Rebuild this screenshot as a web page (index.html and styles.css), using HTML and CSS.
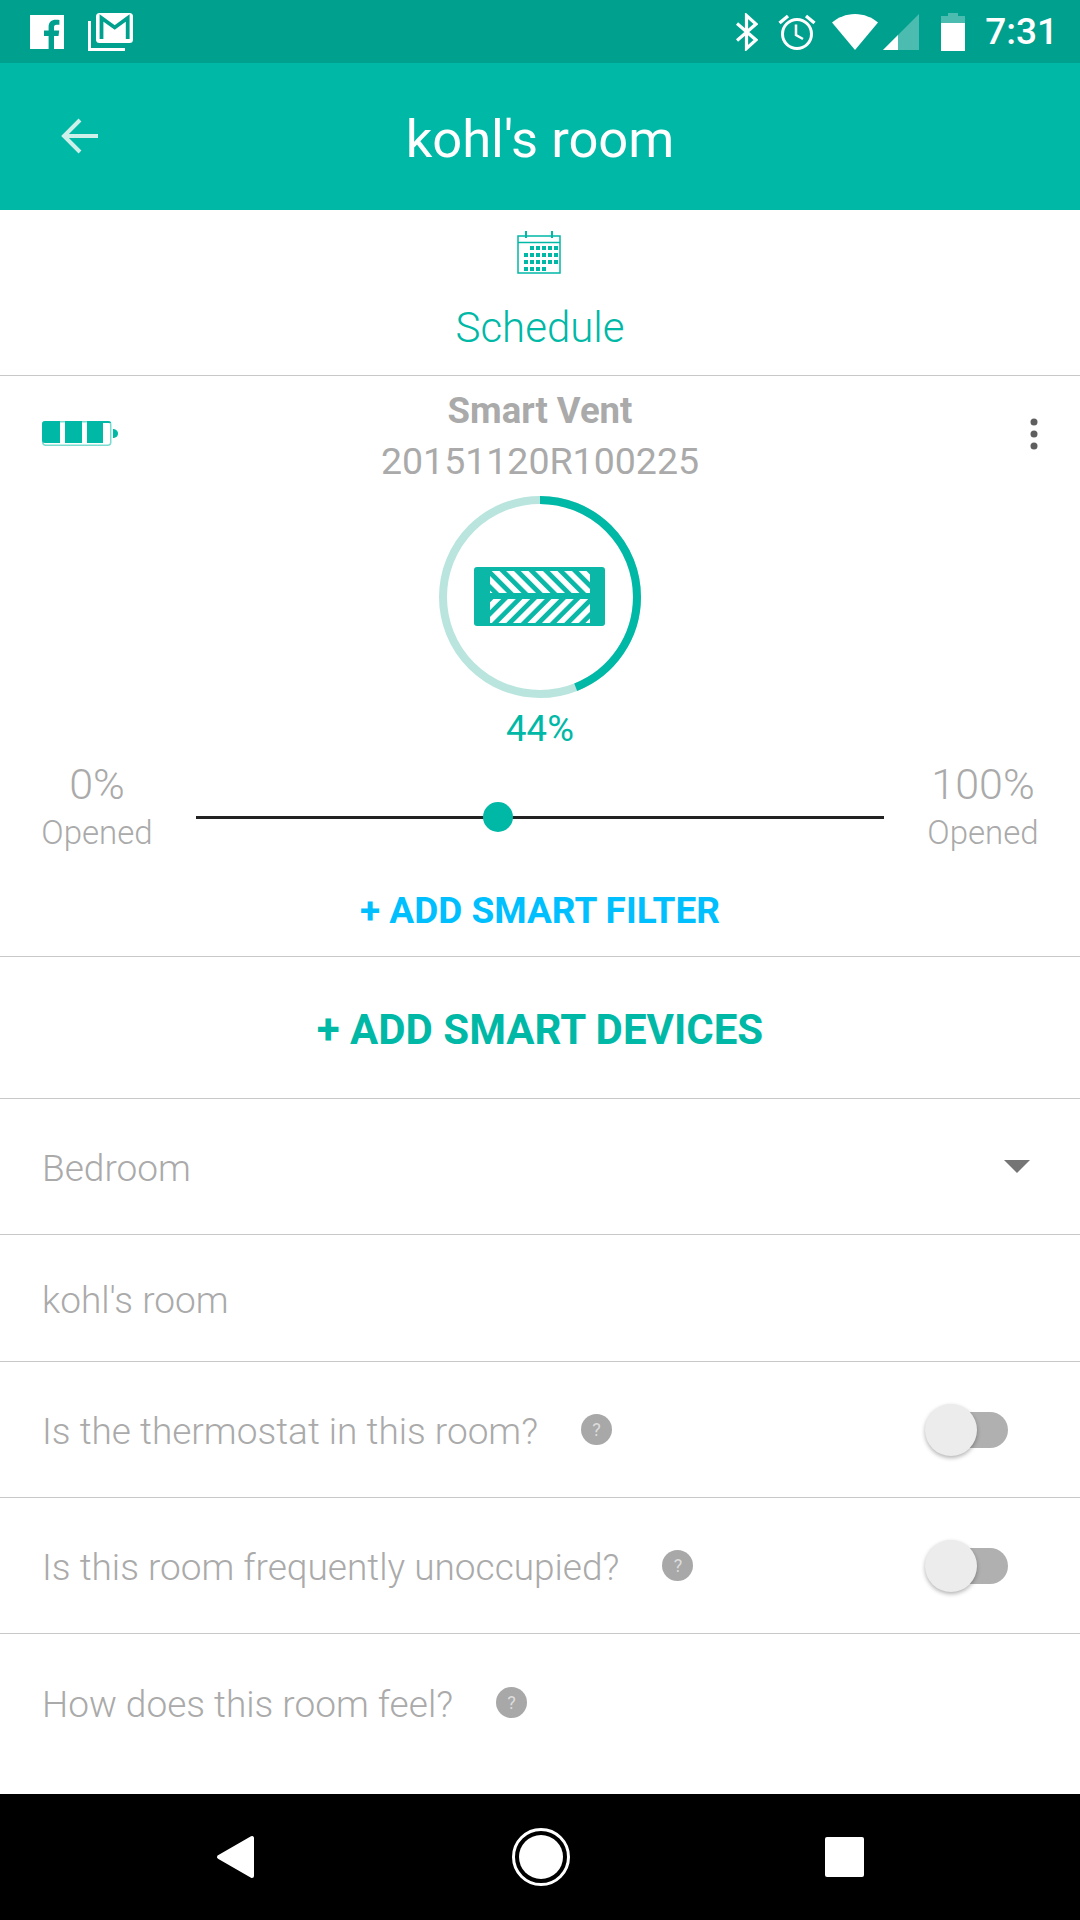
FILE: index.html
```html
<!DOCTYPE html>
<html lang="en">
<head>
    <meta charset="UTF-8">
    <meta name="viewport" content="width=device-width, initial-scale=1.0">
    <title>kohl's room</title>
    <link rel="stylesheet" href="styles.css">
</head>
<body>
    <div class="phone">
        <!-- Status bar -->
        <div class="status-bar">
            <div class="status-left">
                <svg class="icon-fb" width="34" height="34" viewBox="0 0 34 34">
                    <path fill="#fff" d="M0 0H34V34H24V21H28.500L29.200 15.500H24V12.500C24 10.800 24.600 9.800 26.700 9.800H29.400V5C28.600 4.900 27.300 4.800 25.600 4.800C21.600 4.800 18.600 7.200 18.600 11.800V15.500H14V21H18.600V34H0Z"/>
                </svg>
                <svg class="icon-gmail" width="46" height="38" viewBox="0 0 46 38">
                    <path fill="none" stroke="#fff" stroke-width="3" d="M1.500 8V36.500H37"/>
                    <rect x="8" y="0" width="37" height="30" rx="3.500" fill="#fff"/>
                    <path fill="none" stroke="#00a08f" stroke-width="3.800" d="M13.500 26V5L26.700 14.500L39.700 5V26"/>
                </svg>
            </div>
            <div class="status-right">
                <svg width="22" height="38" viewBox="0 0 22 38">
                    <path fill="none" stroke="#fff" stroke-width="3.200" d="M1 10.500L20 27L10.500 35.500V2.500L20 11L1 27.500"/>
                </svg>
                <svg class="icon-alarm" width="38" height="38" viewBox="0 0 38 38">
                    <circle cx="19" cy="21" r="14.500" fill="none" stroke="#fff" stroke-width="3"/>
                    <path fill="none" stroke="#fff" stroke-width="2.500" d="M18 11.500V22L25 26"/>
                    <path fill="none" stroke="#fff" stroke-width="3.400" d="M1.500 10L10 3M36.500 10L28 3"/>
                </svg>
                <svg class="icon-wifi" width="46" height="36" viewBox="0 0 46 36">
                    <path fill="#fff" d="M0 8.500C6 3.500 14 0 23 0C32 0 40 3.500 46 8.500L23 36Z"/>
                </svg>
                <svg class="icon-signal" width="36" height="36" viewBox="0 0 36 36">
                    <path fill="#fff" fill-opacity="0.3" d="M36 0V36H0Z"/>
                    <path fill="#fff" d="M15 21V36H0Z"/>
                </svg>
                <svg class="icon-battery" width="24" height="38" viewBox="0 0 24 38">
                    <path fill="#fff" fill-opacity="0.3" d="M7 0H17V3H24V10H0V3H7Z"/>
                    <rect y="10" width="24" height="28" fill="#fff"/>
                </svg>
                <span class="clock">7:31</span>
            </div>
        </div>

        <!-- Header -->
        <div class="app-bar">
            <svg class="back-arrow" width="38" height="36" viewBox="0 0 38 36">
                <path fill="none" stroke="#cdf0ea" stroke-width="4" d="M37 18H3M19 2L3 18L19 34"/>
            </svg>
            <h1>kohl's room</h1>
        </div>

        <div class="schedule">
            <svg class="schedule-icon" width="44" height="43" viewBox="0 0 44 43">
                <path fill="none" stroke="#00b8a6" stroke-width="1.500" d="M1 5H43V42H1ZM1 11.500H43"/>
                <path fill="none" stroke="#00b8a6" stroke-width="2" d="M9 0V7M35 0V7"/>
                <g fill="#00b8a6">
                    <rect x="13" y="15" width="4" height="4"/><rect x="19" y="15" width="4" height="4"/><rect x="25" y="15" width="4" height="4"/><rect x="31" y="15" width="4" height="4"/><rect x="37" y="15" width="4" height="4"/>
                    <rect x="7" y="22" width="4" height="4"/><rect x="13" y="22" width="4" height="4"/><rect x="19" y="22" width="4" height="4"/><rect x="25" y="22" width="4" height="4"/><rect x="31" y="22" width="4" height="4"/><rect x="37" y="22" width="4" height="4"/>
                    <rect x="7" y="29" width="4" height="4"/><rect x="13" y="29" width="4" height="4"/><rect x="19" y="29" width="4" height="4"/><rect x="25" y="29" width="4" height="4"/><rect x="31" y="29" width="4" height="4"/><rect x="37" y="29" width="4" height="4"/>
                    <rect x="7" y="36" width="4" height="4"/><rect x="13" y="36" width="4" height="4"/><rect x="19" y="36" width="4" height="4"/><rect x="25" y="36" width="4" height="4"/>
                </g>
            </svg>
            <div class="schedule-label">Schedule</div>
        </div>

        <!-- Vent -->
        <div class="vent">
            <svg class="vent-battery" width="76" height="25" viewBox="0 0 76 25">
                <rect x="0.750" y="0.750" width="68" height="23.500" rx="3" fill="#fff" stroke="#7adccf" stroke-width="1.500"/>
                <path fill="#00b8a6" d="M3 0H18V22H3Q0 22 0 19V3Q0 0 3 0ZM23 0H40V22H23ZM45 0H61V22H45ZM61 0H66Q69 0 69 2H61Z"/>
                <path fill="#00b8a6" d="M71 8H72Q76 9 76 12.500Q76 16 72 17H71Z"/>
            </svg>
            <svg class="vent-menu" width="8" height="32" viewBox="0 0 8 32">
                <circle cx="4" cy="4" r="3.500" fill="#5f5f5f"/>
                <circle cx="4" cy="16" r="3.500" fill="#5f5f5f"/>
                <circle cx="4" cy="28" r="3.500" fill="#5f5f5f"/>
            </svg>
            <div class="vent-name">Smart Vent</div>
            <div class="vent-serial">20151120R100225</div>
            <svg class="vent-dial" width="204" height="204" viewBox="0 0 204 204">
                <defs>
                    <pattern id="stripes-down" width="10.250" height="10.250" patternUnits="userSpaceOnUse" patternTransform="rotate(45)">
                        <rect width="10.250" height="5.500" fill="#fff"/>
                    </pattern>
                    <pattern id="stripes-up" width="10.250" height="10.250" patternUnits="userSpaceOnUse" patternTransform="rotate(-45)">
                        <rect width="10.250" height="5.500" fill="#fff"/>
                    </pattern>
                </defs>
                <circle cx="102" cy="102" r="97" fill="none" stroke="#b9e5de" stroke-width="8"/>
                <circle cx="102" cy="102" r="97" fill="none" stroke="#00b8a6" stroke-width="8" pathLength="100" stroke-dasharray="44 56" transform="rotate(-90 102 102)"/>
                <rect x="36" y="72" width="131" height="59" rx="3" fill="#0bb8a7"/>
                <rect x="52" y="76" width="100" height="22" fill="url(#stripes-down)"/>
                <rect x="52" y="104" width="100" height="24" fill="url(#stripes-up)"/>
            </svg>
            <div class="vent-percent">44%</div>
            <div class="slider-row">
                <div class="slider-end">
                    <div class="slider-value">0%</div>
                    <div class="slider-caption">Opened</div>
                </div>
                <div class="slider">
                    <div class="slider-thumb"></div>
                </div>
                <div class="slider-end">
                    <div class="slider-value">100%</div>
                    <div class="slider-caption">Opened</div>
                </div>
            </div>
            <div class="add-filter">+ ADD SMART FILTER</div>
        </div>

        <div class="add-devices">+ ADD SMART DEVICES</div>

        <!-- Room settings -->
        <div class="row">
            <span class="row-text">Bedroom</span>
            <span class="caret"></span>
        </div>
        <div class="row row-name">
            <span class="row-text">kohl's room</span>
        </div>
        <div class="row">
            <span class="row-text">Is the thermostat in this room?</span>
            <span class="help">?</span>
            <span class="toggle"><span class="toggle-thumb"></span></span>
        </div>
        <div class="row">
            <span class="row-text">Is this room frequently unoccupied?</span>
            <span class="help">?</span>
            <span class="toggle"><span class="toggle-thumb"></span></span>
        </div>
        <div class="row row-last">
            <span class="row-text">How does this room feel?</span>
            <span class="help">?</span>
        </div>

        <!-- Android nav -->
        <div class="nav-bar">
            <svg width="40" height="44" viewBox="0 0 40 44">
                <path fill="#fff" stroke="#fff" stroke-width="4" stroke-linejoin="round" d="M36 3V41L3 22Z"/>
            </svg>
            <svg width="58" height="58" viewBox="0 0 58 58">
                <circle cx="29" cy="29" r="27.500" fill="none" stroke="#fff" stroke-width="3"/>
                <circle cx="29" cy="29" r="22" fill="#fff"/>
            </svg>
            <div class="nav-square"></div>
        </div>
    </div>
</body>
</html>
```

FILE: styles.css
```css
* {
    box-sizing: border-box;
}

body {
    margin: 0;
    font-family: Roboto, "Liberation Sans", sans-serif;
    background-color: #fff;
}

.phone {
    width: 1080px;
    height: 1920px;
    display: flex;
    flex-direction: column;
    overflow: hidden;
}

.status-bar {
    height: 63px;
    background-color: #00a08f;
    display: flex;
    justify-content: space-between;
    align-items: center;
    padding: 0 22px 0 30px;
}

.status-left,
.status-right {
    display: flex;
    align-items: center;
}

.icon-gmail {
    margin-left: 24px;
}

.icon-alarm {
    margin-left: 20px;
}

.icon-wifi {
    margin-left: 16px;
}

.icon-signal {
    margin-left: 5px;
}

.icon-battery {
    margin-left: 22px;
}

.clock {
    margin-left: 20px;
    color: #fff;
    font-size: 37px;
    font-weight: 500;
    line-height: 38px;
}

.app-bar {
    height: 147px;
    background-color: #00b8a6;
    position: relative;
    display: flex;
    align-items: center;
    justify-content: center;
}

.app-bar h1 {
    margin: 0;
    padding-top: 4px;
    color: #fff;
    font-size: 52.500px;
    font-weight: 400;
}

.back-arrow {
    position: absolute;
    left: 61px;
    top: 55px;
}

.schedule {
    height: 166px;
    border-bottom: 1px solid #c8c8c8;
    display: flex;
    flex-direction: column;
    align-items: center;
    padding-top: 21px;
}

.schedule-icon {
    margin-right: 2px;
}

.schedule-label {
    margin-top: 30px;
    color: #00b8a6;
    font-size: 42px;
    font-weight: 300;
    line-height: 48px;
}

.vent {
    height: 581px;
    border-bottom: 1px solid #c8c8c8;
    position: relative;
    display: flex;
    flex-direction: column;
    align-items: center;
    padding-top: 16px;
}

.vent-battery {
    position: absolute;
    left: 42px;
    top: 45px;
}

.vent-menu {
    position: absolute;
    left: 1030px;
    top: 42px;
}

.vent-name {
    color: #aaa;
    font-size: 36.500px;
    font-weight: 700;
    line-height: 38px;
}

.vent-serial {
    margin-top: 10px;
    color: #aaa;
    font-size: 37.500px;
    line-height: 42px;
}

.vent-dial {
    margin-top: 13px;
}

.vent-percent {
    margin-top: 10px;
    color: #00b8a6;
    font-size: 36.500px;
    line-height: 40px;
}

.slider-row {
    width: 100%;
    display: flex;
    align-items: flex-start;
    justify-content: space-between;
    padding: 0 37px;
    margin-top: 12px;
}

.slider-end {
    width: 120px;
    text-align: center;
    color: #aaa;
}

.slider-value {
    font-size: 43px;
    line-height: 46px;
    font-weight: 300;
}

.slider-caption {
    margin-top: 6px;
    font-size: 33px;
    line-height: 40px;
    font-weight: 300;
}

.slider {
    width: 688px;
    height: 3px;
    margin-top: 55px;
    background-color: #222;
    position: relative;
}

.slider-thumb {
    width: 30px;
    height: 30px;
    border-radius: 50%;
    background-color: #00b8a6;
    position: absolute;
    left: 287px;
    top: -14px;
}

.add-filter {
    margin-top: 38px;
    color: #00bfff;
    font-size: 37px;
    font-weight: 700;
    line-height: 40px;
}

.add-devices {
    height: 142px;
    padding-top: 4px;
    border-bottom: 1px solid #c8c8c8;
    display: flex;
    align-items: center;
    justify-content: center;
    color: #00b8a6;
    font-size: 42px;
    font-weight: 700;
}

.row {
    height: 136px;
    border-bottom: 1px solid #c8c8c8;
    display: flex;
    align-items: center;
    padding: 0 42px;
    position: relative;
}

.row-name {
    height: 127px;
}

.row-last {
    border-bottom: none;
}

.row-text {
    padding-top: 4px;
    color: #aaa;
    font-size: 37px;
    font-weight: 300;
}

.caret {
    margin-left: auto;
    margin-right: 8px;
    width: 0;
    height: 0;
    border-left: 13px solid transparent;
    border-right: 13px solid transparent;
    border-top: 13px solid #757575;
}

.help {
    width: 31px;
    height: 31px;
    margin-left: 43px;
    border-radius: 50%;
    background-color: #a8a8a8;
    color: #ddd;
    font-size: 18px;
    line-height: 31px;
    text-align: center;
}

.toggle {
    width: 66px;
    height: 36px;
    margin-left: auto;
    margin-right: 30px;
    border-radius: 18px;
    background-color: #b0b0b0;
    position: relative;
}

.toggle-thumb {
    width: 52px;
    height: 52px;
    border-radius: 50%;
    background-color: #ececec;
    position: absolute;
    left: -17px;
    top: -8px;
    box-shadow: 0 2px 4px rgba(0,0,0,0.3);
}

.nav-bar {
    height: 126px;
    margin-top: auto;
    background-color: #000;
    display: flex;
    align-items: center;
    justify-content: space-between;
    padding: 0 216px;
}

.nav-square {
    width: 39px;
    height: 40px;
    border-radius: 2px;
    background-color: #fff;
}
```
